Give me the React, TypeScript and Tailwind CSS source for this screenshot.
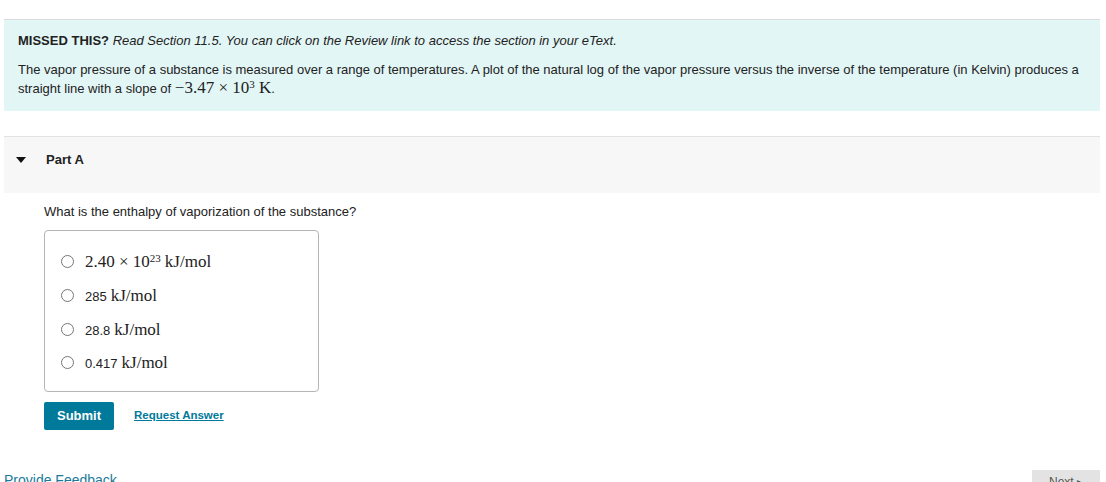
import { useState } from "react";

const options = [
  { id: "a", num: null as string | null, sci: true },
  { id: "b", num: "285", sci: false },
  { id: "c", num: "28.8", sci: false },
  { id: "d", num: "0.417", sci: false },
];

const Unit = () => (
  <span className="font-['Liberation_Serif',serif] text-[17px]">kJ/mol</span>
);

const App = () => {
  const [picked, setPicked] = useState<string | null>(null);

  return (
    <div className="min-h-[482px] bg-white font-['Liberation_Sans',Arial,sans-serif] text-[13px] text-[#222] overflow-hidden">
      <div className="mx-[4px] w-[1096px] pt-[19px]">
        <div className="border-t border-[#dcdcdc] bg-[#e2f6f6] pl-[14px] pr-4 pt-[12px] pb-[13px] leading-[18px]">
          <p>
            <span className="font-bold">MISSED THIS?</span>{" "}
            <span className="italic">Read Section 11.5. You can click on the Review link to access the section in your eText.</span>
          </p>
          <p className="mt-[11px]">
            The vapor pressure of a substance is measured over a range of temperatures. A plot of the natural log of the vapor pressure versus the inverse of the temperature (in Kelvin) produces a straight line with a slope of{" "}
            <span className="font-['Liberation_Serif',serif] text-[17px] leading-none">
              −3.47 × 10<sup className="text-[11px] leading-none">3</sup> K
            </span>
            .
          </p>
        </div>

        <div className="mt-[25px] border-t border-[#e2e2e2] bg-[#f7f7f7] h-[57px] flex items-center pb-[10px]">
          <svg width="10" height="6" viewBox="0 0 10 6" className="ml-[12px]">
            <path d="M0 0h10L5 6z" fill="#111" />
          </svg>
          <span className="ml-[20px] font-bold text-[13px]">Part A</span>
        </div>

        <div className="pl-[40px]">
          <p className="mt-[11px] leading-[16px]">What is the enthalpy of vaporization of the substance?</p>

          <div className="mt-[10px] w-[275px] h-[162px] rounded-[4px] border border-[#b5b5b5] pt-[14px] pl-[16px] flex flex-col">
            {options.map((o) => (
              <label key={o.id} className="flex items-center h-[33.7px] cursor-pointer">
                <span
                  onClick={() => setPicked(o.id)}
                  className={`w-[13px] h-[13px] rounded-full border ${picked === o.id ? "border-[#007a9a] border-[4px]" : "border-[#767676]"} bg-white`}
                />
                <span className="ml-[11px] flex items-baseline gap-[4px] leading-none">
                  {o.sci ? (
                    <span className="font-['Liberation_Serif',serif] text-[17px]">
                      2.40 × 10<sup className="text-[11px] leading-none">23</sup>
                    </span>
                  ) : (
                    <span className="text-[13px]">{o.num}</span>
                  )}
                  <Unit />
                </span>
              </label>
            ))}
          </div>

          <div className="mt-[10px] flex items-center">
            <button className="w-[70px] h-[28px] rounded-[2px] bg-[#007a9a] text-white text-[13px] font-bold">
              Submit
            </button>
            <a href="#" className="ml-[20px] text-[11.5px] font-bold text-[#007a9a] underline">
              Request Answer
            </a>
          </div>
        </div>

        <div className="mt-[42px] flex items-start justify-between">
          <a href="#" className="text-[14px] leading-[16px] text-[#1b7a99]">Provide Feedback</a>
          <button className="w-[68px] h-[24px] bg-[#e3e3e3] text-[#555] text-[12px] mt-[-2px]">Next ▸</button>
        </div>
      </div>
    </div>
  );
};

export default App;
